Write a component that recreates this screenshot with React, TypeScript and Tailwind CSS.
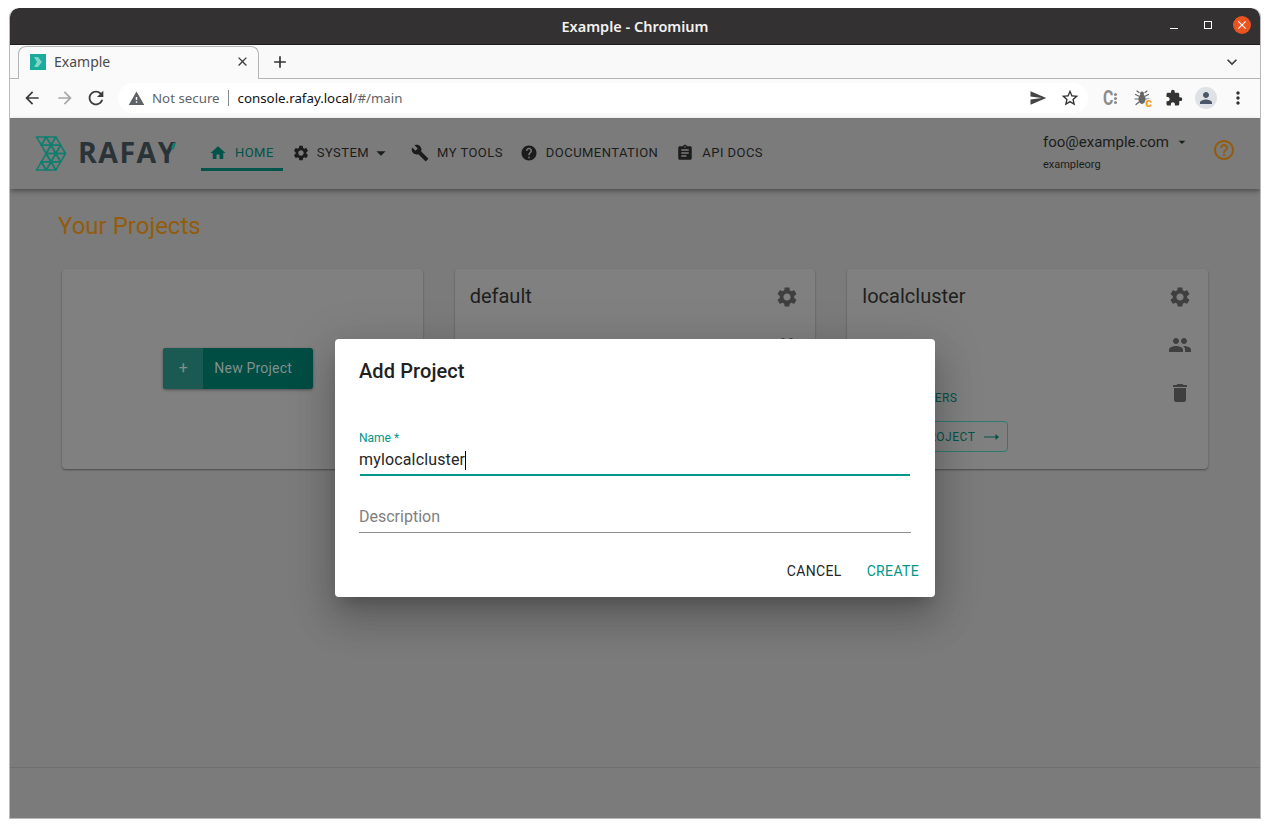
import {
    MdAdd, MdArrowBack, MdArrowDropDown, MdArrowForward, MdAssignment, MdBuild, MdClose, MdDelete, MdExpandMore,
    MdExtension, MdHelp, MdHelpOutline, MdHome, MdMoreVert, MdPeople, MdPerson, MdRefresh, MdSend, MdSettings, MdStarBorder, MdWarning,
} from 'react-icons/md';

// triangles of the upper half of the logo, the lower half is mirrored
const LOGO_TRIANGLES = [
    [0, 0, 10.5, 0, 5.25, 9], [10.5, 0, 21, 0, 15.75, 9], [5.25, 9, 15.75, 9, 10.5, 0], [15.75, 9, 26.25, 9, 21, 0],
    [5.25, 9, 15.75, 9, 10.5, 18], [15.75, 9, 26.25, 9, 21, 18], [10.5, 18, 21, 18, 15.75, 9], [21, 18, 31.5, 18, 26.25, 9],
];

function Logo() {
    const points = (t: number[], flip: boolean) =>
        [0, 2, 4].map((i) => `${t[i]},${flip ? 36 - t[i + 1] : t[i + 1]}`).join(' ');
    return (
        <div className="relative flex items-center w-[142px] shrink-0 -mt-[2px]">
            <svg className="w-[32px] h-[35px] shrink-0" viewBox="-1 -1 33.5 38" fill="none" stroke="#0f7f70" strokeWidth={1.7} strokeLinejoin="round">
                {LOGO_TRIANGLES.map((t, i) => <polygon key={i} points={points(t, false)} />)}
                {LOGO_TRIANGLES.map((t, i) => <polygon key={i} points={points(t, true)} />)}
            </svg>
            <span className="ml-[11px] -mt-[1px] font-['Open_Sans',sans-serif] font-bold text-[28.5px] leading-none tracking-[1.5px] text-[#2a3338]">RAFAY</span>
            <svg className="absolute left-[136px] top-[7px] w-[5px] h-[7px]" viewBox="0 0 5 7"><polygon points="2,0 5,0 2.5,7 0,5" fill="#0f7f70" /></svg>
        </div>
    );
}

function NavItem({ icon, label, gap, ml, active }: { icon: React.ReactNode; label: string; gap: string; ml: string; active?: boolean }) {
    return (
        <div className={`flex items-center h-[34px] border-b-[3px] ${ml} ${gap} text-[13px] tracking-[0.45px] ${active ? 'pl-[8px] pr-[9px] border-[#005449] text-[#005449]' : 'border-transparent text-[#1c1c1c]'}`}>
            {icon}
            <span className="whitespace-nowrap">{label}</span>
        </div>
    );
}

function ProjectCard({ name }: { name: string }) {
    return (
        <div className="h-[200px] rounded bg-[#808080] shadow-[0_1px_2px_rgba(0,0,0,0.4)] flex justify-between pl-[15px] pr-4 pt-[15px]">
            <div className="flex flex-col">
                <div className="text-[20px] leading-6 text-[#1e1e1e]">{name}</div>
                <div className="mt-[82px] w-[95px] text-right whitespace-nowrap text-[12px] leading-4 tracking-[0.4px] text-[#005449]">VIEW CLUSTERS</div>
                <div className="mt-[15px] w-[146px] h-[31px] rounded border border-[#2f7a70] flex items-center justify-end gap-[9px] pr-[8px] text-[12px] tracking-[0.5px] text-[#005449]">
                    <span className="whitespace-nowrap">GO TO PROJECT</span>
                    <svg className="w-[15px] h-[8px]" viewBox="0 0 15 8" fill="#005449"><path d="M0 3.4h11.5V1L15 4l-3.5 3V4.6H0z" /></svg>
                </div>
            </div>
            <div className="mt-[1px] flex flex-col gap-6 text-[#3f3f3f]">
                <MdSettings size={24} />
                <MdPeople size={24} />
                <MdDelete size={24} />
            </div>
        </div>
    );
}

function AddProjectDialog() {
    return (
        <div className="absolute inset-0 pb-[2px] flex items-center justify-center">
            <div className="w-[600px] h-[258px] rounded bg-white shadow-[0_11px_15px_-7px_rgba(0,0,0,0.2),0_24px_38px_3px_rgba(0,0,0,0.14),0_9px_46px_8px_rgba(0,0,0,0.12)] flex flex-col">
                <div className="px-6 pt-[19px] text-[20px] leading-[26px] tracking-[0.1px] font-medium text-[#212121]">Add Project</div>
                <div className="px-6 mt-[47px]">
                    <div className="text-[12px] leading-[14px] text-[#009688]">Name *</div>
                    <div className="h-[23px] mt-[4px] flex items-center text-[16px] tracking-[0.15px] text-[#262626]">
                        mylocalcluster<span className="w-px h-[19px] bg-black" />
                    </div>
                    <div className="mt-[2px] h-[2px] bg-[#009688] mx-px" />
                    <div className="mt-[29px] h-[24px] flex items-center text-[16px] text-[#808080]">Description</div>
                    <div className="h-px mt-[3px] bg-[#8f8f8f]" />
                </div>
                <div className="mt-[30px] flex justify-end gap-[25px] pr-4 text-[14px] leading-4 tracking-[0.35px]">
                    <span className="text-[#262626]">CANCEL</span>
                    <span className="text-[#009688]">CREATE</span>
                </div>
            </div>
        </div>
    );
}

function BrowserChrome() {
    return (
        <div className="font-['Noto_Sans',sans-serif]">
            <div className="h-[37px] pt-[2px] rounded-t-[9px] bg-[#333131] border-b border-[#1f1e1e] flex items-center justify-center relative">
                <span className="text-[14.5px] font-semibold text-[#f2f2f2]">Example - Chromium</span>
                <div className="absolute right-[9px] top-[8px] flex items-center">
                    <span className="w-[8px] h-px bg-white mt-[7px] mr-[26px]" />
                    <span className="w-[8px] h-[8px] border border-white mr-[21px]" />
                    <span className="w-[18px] h-[18px] rounded-full bg-[#e95420] flex items-center justify-center text-white"><MdClose size={14} /></span>
                </div>
            </div>
            <div className="h-[34px] bg-[#f9f9f9] border-b border-[#b4b4b4] flex items-end pl-[8px] relative">
                <div className="relative w-[241px] h-[33px] -mb-px pb-[3px] rounded-t-[8px] border border-b-0 border-[#b4b4b4] bg-[#fafafa] flex items-center pl-[11px] pr-[8px]">
                    <span className="w-4 h-4 bg-[#1aab9b] flex items-center justify-center shrink-0">
                        <svg className="w-[8px] h-[10px]" viewBox="0 0 8 10" fill="#7fd6ca"><polygon points="0,0 4,0 8,5 4,10 0,10 3,5" /></svg>
                    </span>
                    <span className="ml-2 text-[14px] text-[#4a4a4a] flex-1">Example</span>
                    <MdClose size={15} className="text-[#3c3c3c]" />
                </div>
                <MdAdd size={20} className="ml-[11px] mb-[6px] text-[#333]" />
                <MdExpandMore size={20} className="absolute right-[18px] top-[7px] text-[#3c3c3c]" />
            </div>
            <div className="h-[40px] pb-px bg-[#fafafa] border-b border-[#808080] flex items-center">
                <MdArrowBack size={20} className="ml-[12px] text-[#3c3c3c]" />
                <MdArrowForward size={20} className="ml-[13px] text-[#a8a8a8]" />
                <MdRefresh size={22} className="ml-[10px] text-[#3c3c3c]" />
                <div className="ml-[11px] w-[970px] h-[30px] rounded-full bg-white flex items-center pl-[10px] pr-[8px] text-[13.3px]">
                    <MdWarning size={17} className="text-[#5f6368]" />
                    <span className="ml-[7px] mt-[1px] text-[#5f6368]">Not secure</span>
                    <span className="w-px h-[16px] bg-[#8a8a8a] ml-[8px] mr-[9px]" />
                    <span className="mt-[1px] text-[#111]">console.rafay.local</span>
                    <span className="mt-[1px] text-[#5f6368]">/#/main</span>
                    <MdSend size={18} className="ml-auto text-[#444]" />
                    <MdStarBorder size={20} className="ml-[13px] text-[#333]" />
                </div>
                <span className="ml-[15px] w-[14px] flex items-center gap-[1px]">
                    <span className="font-[Roboto,sans-serif] text-[21px] leading-none font-bold text-[#8c8c8c] scale-x-75 origin-left w-[10px]">C</span>
                    <span className="flex flex-col gap-[1px]">
                        <span className="w-[3px] h-[3px] rounded-full bg-[#8c8c8c]" />
                        <span className="w-[3px] h-[3px] rounded-full bg-[#8c8c8c]" />
                        <span className="w-[3px] h-[3px] rounded-full bg-[#8c8c8c]" />
                    </span>
                </span>
                <span className="relative ml-[17px] w-[16px] h-[16px]">
                    <svg className="w-4 h-4" viewBox="0 0 16 16" fill="none" stroke="#666" strokeWidth={1.2} strokeLinecap="round">
                        <ellipse cx="8" cy="9" rx="3.5" ry="5" fill="#666" stroke="none" />
                        <circle cx="8" cy="3.5" r="2" fill="#666" stroke="none" />
                        <path d="M5 2.5 3 1M11 2.5 13 1M4.5 6 1.5 4.5M11.5 6 14.5 4.5M4.5 9H1M11.5 9H15M5 12 2 14.5M11 12 14 14.5" />
                    </svg>
                    <span className="absolute -right-[2px] -bottom-[3px] font-[Roboto,sans-serif] text-[13px] leading-none font-bold text-[#f59a23] [text-shadow:-1px_0_#fafafa,0_-1px_#fafafa]">c</span>
                </span>
                <MdExtension size={18} className="ml-[15px] text-[#333]" />
                <span className="ml-[12px] w-[22px] h-[22px] rounded-full bg-[#dee1e6] flex items-center justify-center text-[#4b5768]"><MdPerson size={18} /></span>
                <MdMoreVert size={20} className="ml-[11px] text-[#333]" />
            </div>
        </div>
    );
}

export default function App() {
    return (
        <div className="h-[828px] bg-white pt-2 pl-[9px] font-[Roboto,sans-serif]">
            <div className="w-[1252px] h-[811px] rounded-t-[9px] border-x border-b border-[#b9b9b9] flex flex-col overflow-hidden">
                <BrowserChrome />
                <div className="relative flex-1 bg-[#7b7b7b] flex flex-col">
                    <header className="h-[70px] shrink-0 flex items-center pl-[25px] shadow-[0_2px_5px_rgba(0,0,0,0.4)] relative">
                        <Logo />
                        <div className="flex items-center">
                            <NavItem active ml="ml-[24px]" gap="gap-2" icon={<MdHome size={18} />} label="HOME" />
                            <NavItem ml="ml-[9px]" gap="gap-[7px]" icon={<MdSettings size={18} />} label="SYSTEM" />
                            <MdArrowDropDown size={22} className="ml-[1px] -mt-[3px] text-[#1c1c1c]" />
                            <NavItem ml="ml-[19px]" gap="gap-2" icon={<MdBuild size={18} />} label="MY TOOLS" />
                            <NavItem ml="ml-[17px]" gap="gap-2" icon={<MdHelp size={18} />} label="DOCUMENTATION" />
                            <NavItem ml="ml-[18px]" gap="gap-2" icon={<MdAssignment size={18} />} label="API DOCS" />
                        </div>
                        <div className="ml-auto text-[#1c1c1c] mr-[24px] flex items-center">
                            <div className="mr-[22px] -mt-[4px]">
                                <div className="flex items-center text-[15px] leading-5">foo@example.com<MdArrowDropDown size={16} className="ml-[5px]" /></div>
                                <div className="mt-[6px] text-[11px] leading-[14px]">exampleorg</div>
                            </div>
                            <MdHelpOutline size={24} className="text-[#935c0d] -mt-[8px]" />
                        </div>
                    </header>
                    <main className="flex-1 px-[48px] pt-[22px]">
                        <h1 className="text-[24px] leading-[30px] text-[#935c0d]">Your Projects</h1>
                        <div className="mt-[28px] mx-[4px] grid grid-cols-3 gap-8">
                            <div className="h-[200px] rounded bg-[#808080] shadow-[0_1px_2px_rgba(0,0,0,0.4)] flex items-center justify-center">
                                <div className="w-[150px] h-[41px] mr-2 mb-[2px] rounded-[3px] bg-[#004d44] shadow-[0_1px_3px_rgba(0,0,0,0.4)] flex items-center overflow-hidden text-[14px] tracking-[0.2px] text-[#80908c]">
                                    <span className="w-[40px] h-full bg-[#1a5a52] flex items-center justify-center text-[16px]">+</span>
                                    <span className="ml-[11px]">New Project</span>
                                </div>
                            </div>
                            <ProjectCard name="default" />
                            <ProjectCard name="localcluster" />
                        </div>
                    </main>
                    <footer className="h-[51px] shrink-0 border-t border-[#6f6f6f]" />
                    <AddProjectDialog />
                </div>
            </div>
        </div>
    );
}
